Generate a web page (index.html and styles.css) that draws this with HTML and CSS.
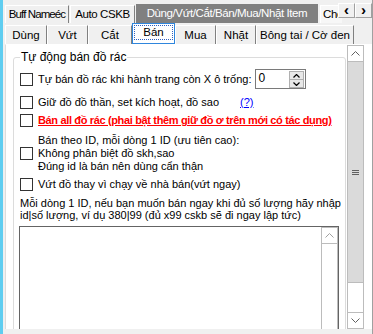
FILE: index.html
```html
<!DOCTYPE html>
<html lang="vi">
<head>
    <meta charset="UTF-8">
    <meta name="viewport" content="width=device-width, initial-scale=1.0">
    <title>Bán đồ rác</title>
    <link rel="stylesheet" href="styles.css">
</head>
<body>
    <div class="window">
        <div class="main">
            <div class="tabs outer">
                <div class="tab t-buff">Buff Nameéc</div>
                <div class="tab t-auto">Auto CSKB</div>
                <div class="tab t-item hot">Dùng/Vứt/Cắt/Bán/Mua/Nhặt Item</div>
                <div class="tab t-cho">Cho</div>
                <div class="arrows">
                    <div class="arrow">&lsaquo;</div>
                    <div class="arrow">&rsaquo;</div>
                </div>
            </div>

            <div class="tabs inner">
                <div class="tab t-dung">Dùng</div>
                <div class="tab t-vut">Vứt</div>
                <div class="tab t-cat">Cắt</div>
                <div class="tab t-ban active"><span class="focus">Bán</span></div>
                <div class="tab t-mua">Mua</div>
                <div class="tab t-nhat">Nhặt</div>
                <div class="tab t-bong">Bông tai / Cờ đen</div>
            </div>

            <div class="page">
                <div class="content">
                    <fieldset class="group">
                        <legend>Tự động bán đồ rác</legend>

                        <div class="row row-slots">
                            <span class="check"></span>
                            <span>Tự bán đồ rác khi hành trang còn X ô trống:</span>
                            <div class="spin">
                                <span class="spin-value">0</span>
                                <div class="spin-buttons">
                                    <span class="spin-btn">
                                        <svg width="7" height="4" viewBox="0 0 7 4"><path d="M0.5 3.5 L3.5 0.5 L6.5 3.5" fill="none" stroke="#000" stroke-width="1.2"/></svg>
                                    </span>
                                    <span class="spin-btn">
                                        <svg width="7" height="4" viewBox="0 0 7 4"><path d="M0.5 0.5 L3.5 3.5 L6.5 0.5" fill="none" stroke="#000" stroke-width="1.2"/></svg>
                                    </span>
                                </div>
                            </div>
                        </div>

                        <div class="row">
                            <span class="check"></span>
                            <span>Giữ đồ đồ thần, set kích hoạt, đồ sao</span>
                            <a class="help" href="#">(?)</a>
                        </div>

                        <div class="row">
                            <span class="check"></span>
                            <span class="warn">Bán all đồ rác (phai bật thêm giữ đồ ơ trên mới có tác dụng)</span>
                        </div>

                        <div class="row row-multi">
                            <span class="check"></span>
                            <span class="lines">Bán theo ID, mỗi dòng 1 ID (ưu tiên cao):<br>Không phân biệt đồ skh,sao<br>Đúng id là bán nên dùng cẩn thận</span>
                        </div>

                        <div class="row">
                            <span class="check"></span>
                            <span>Vứt đồ thay vì chạy về nhà bán(vứt ngay)</span>
                        </div>

                        <p class="note">Mỗi dòng 1 ID, nếu bạn muốn bán ngay khi đủ số lượng hãy nhập<br>id|số lượng, ví dụ 380|99 (đủ x99 cskb sẽ đi ngay lập tức)</p>

                        <div class="textbox">
                            <div class="text-area"></div>
                            <div class="mini-scroll">
                                <span class="sb-btn">
                                    <svg width="9" height="5" viewBox="0 0 9 5"><path d="M0.5 4.5 L4.5 0.5 L8.5 4.5" fill="none" stroke="#a0a0a0" stroke-width="1"/></svg>
                                </span>
                                <span class="sb-track"></span>
                            </div>
                        </div>
                    </fieldset>
                </div>

                <div class="vscroll">
                    <span class="sb-btn">
                        <svg width="9" height="5" viewBox="0 0 9 5"><path d="M0.5 4.5 L4.5 0.5 L8.5 4.5" fill="none" stroke="#606060" stroke-width="1"/></svg>
                    </span>
                    <span class="thumb">
                        <svg width="7" height="7" viewBox="0 0 7 7"><path d="M0 1.5 H7 M0 3.5 H7 M0 5.5 H7" stroke="#606060" stroke-width="1"/></svg>
                    </span>
                    <span class="track"></span>
                    <span class="sb-btn">
                        <svg width="9" height="5" viewBox="0 0 9 5"><path d="M0.5 0.5 L4.5 4.5 L8.5 0.5" fill="none" stroke="#606060" stroke-width="1"/></svg>
                    </span>
                </div>
            </div>
        </div>
    </div>
</body>
</html>
```

FILE: styles.css
```css
/* Window */
body {
    margin: 0;
    background: #f0f0f0;
    font-family: 'Liberation Sans', Arial, sans-serif;
    font-size: 11px;
    color: #000;
}

.window {
    height: 334px;
    overflow: hidden;
    border-left: 3px solid #5fcdf0;
    display: flex;
}

.main {
    flex: 1;
    padding-left: 2px;
    display: flex;
    flex-direction: column;
    border-right: 1px solid #a0a0a0;
}

/* Tab strips */
.tabs {
    display: flex;
    align-items: flex-end;
}

.tabs.outer {
    margin-top: 3px;
    height: 20px;
}

.tabs.inner {
    height: 21px;
}

.tab {
    box-sizing: border-box;
    height: 18px;
    line-height: 16px;
    text-align: center;
    white-space: nowrap;
    border-top: 1px solid #fff;
    border-left: 1px solid #fff;
    border-right: 1px solid #808080;
    background: #f0f0f0;
    font-size: 11.5px;
}

.outer .tab {
    letter-spacing: -0.4px;
    overflow: hidden;
}

.outer .t-buff { width: 64px; letter-spacing: -0.9px; }
.t-auto { width: 65px; margin-left: 1px; }
.t-item {
    width: 182px;
    margin-left: 1px;
    height: 19px;
    line-height: 18px;
    background: #808080;
    color: #fff;
    border: none;
}
.t-cho {
    width: 22px;
    margin-left: 2px;
    text-align: left;
    padding-left: 2px;
    border-right: none;
    background: #f7f7f7;
}

.arrows {
    display: flex;
    align-self: flex-start;
    margin-left: -4px;
}

.arrow {
    box-sizing: border-box;
    width: 17px;
    height: 15px;
    line-height: 12px;
    text-align: center;
    font-size: 15px;
    font-weight: bold;
    background: #f0f0f0;
    border: 1px solid #fff;
    border-right-color: #a0a0a0;
    border-bottom-color: #a0a0a0;
}

.inner .tab {
    height: 19px;
    line-height: 18px;
}

.t-dung { width: 42px; }
.t-vut { width: 41px; }
.t-cat { width: 44px; }
.t-ban { width: 43px; }
.t-mua { width: 41px; }
.t-nhat { width: 40px; }
.t-bong { width: 98px; }

.inner .tab.active {
    height: 21px;
    padding: 2px;
    background: #fff;
    border: 1px solid #2f86dd;
    line-height: 13px;
}

.focus {
    display: block;
    height: 13px;
    outline: 1px dotted #3060c0;
    outline-offset: 0;
}

/* Tab page */
.page {
    height: 284px;
    display: flex;
    background: #fff;
    border-left: 1px solid #dcdcdc;
    border-top: 1px solid #fff;
    overflow: hidden;
}

.content {
    width: 340px;
    padding: 6px 0 0 7px;
    box-sizing: border-box;
}

.group {
    margin: 0;
    width: 333px;
    box-sizing: border-box;
    border: 1px solid #dcdcdc;
    border-radius: 3px;
    padding: 0 0 10px 5px;
}

.group legend {
    margin-left: 1px;
    padding: 0 1px;
    line-height: 13px;
    font-size: 12px;
}

/* Rows */
.row {
    display: flex;
    align-items: center;
    height: 18px;
    padding-left: 1px;
}

.check {
    box-sizing: border-box;
    width: 13px;
    height: 13px;
    border: 1px solid #333;
    background: #fff;
    margin-right: 5px;
    flex-shrink: 0;
}

.row-slots {
    height: 20px;
    margin-top: 5px;
    margin-bottom: 4px;
}

.spin {
    display: flex;
    box-sizing: border-box;
    width: 51px;
    height: 20px;
    margin-left: 4px;
    border: 1px solid #7a7a7a;
}

.spin-value {
    flex: 1;
    padding-left: 2px;
    line-height: 17px;
    font-size: 12px;
}

.spin-buttons {
    display: flex;
    flex-direction: column;
    width: 15px;
    padding: 1px;
}

.spin-btn {
    flex: 1;
    display: flex;
    align-items: center;
    justify-content: center;
    background: #e8e8e8;
    border: 1px solid #b0b0b0;
    margin-bottom: -1px;
}

.help {
    margin-left: 21px;
    color: #0000ff;
}

.warn {
    color: #ff0000;
    font-weight: bold;
    text-decoration: underline;
    letter-spacing: -0.35px;
}

.row-multi {
    height: auto;
    margin-top: 3px;
    padding-top: 2px;
    padding-bottom: 2px;
}

.lines {
    line-height: 13px;
}

.note {
    margin: 4px 0 0 1px;
    line-height: 12px;
}

/* Text box */
.textbox {
    display: flex;
    margin-top: 5px;
    width: 320px;
    height: 110px;
    box-sizing: border-box;
    border: 1px solid #646464;
}

.text-area {
    flex: 1;
}

.mini-scroll {
    width: 17px;
    display: flex;
    flex-direction: column;
}

/* Scroll bars */
.sb-btn {
    box-sizing: border-box;
    height: 17px;
    display: flex;
    align-items: center;
    justify-content: center;
    border: 1px solid #bcbcbc;
    background: #fff;
}

.sb-track {
    flex: 1;
    border: 1px solid #bcbcbc;
    border-top: none;
}

.vscroll {
    width: 17px;
    margin-left: 1px;
    display: flex;
    flex-direction: column;
    box-sizing: border-box;
}

.thumb {
    height: 220px;
    display: flex;
    align-items: center;
    justify-content: center;
    background: #dadada;
    border: 1px solid #bcbcbc;
    border-top: none;
}

.track {
    flex: 1;
    border-left: 1px solid #bcbcbc;
    border-right: 1px solid #bcbcbc;
}
```
